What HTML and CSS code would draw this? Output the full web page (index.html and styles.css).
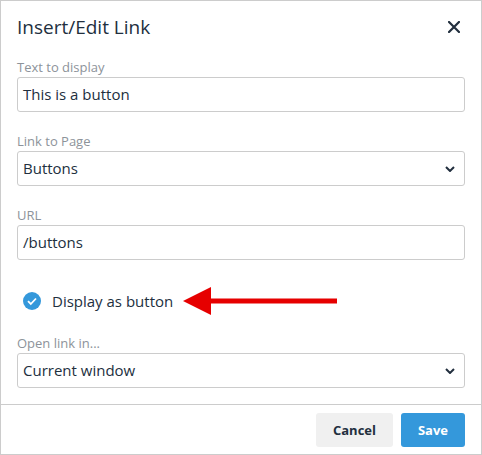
FILE: index.html
```html
<!DOCTYPE html>
<html lang="en">
<head>
    <meta charset="UTF-8">
    <meta name="viewport" content="width=device-width, initial-scale=1.0">
    <title>Insert/Edit Link</title>
    <link rel="stylesheet" href="styles.css">
</head>
<body>
    <div class="dialog">
        <div class="dialog-header">
            <h1 class="dialog-title">Insert/Edit Link</h1>
            <button class="close-btn" title="Close">
                <svg width="12" height="12" viewBox="0 0 12 12">
                    <path d="M1 1 L11 11 M11 1 L1 11" stroke="#222f3e" stroke-width="2.2" stroke-linecap="square"/>
                </svg>
            </button>
        </div>

        <div class="dialog-body">
            <div class="field">
                <label class="field-label">Text to display</label>
                <div class="text-input">This is a button</div>
            </div>

            <div class="field">
                <label class="field-label">Link to Page</label>
                <div class="text-input select">
                    <span>Buttons</span>
                    <svg class="chevron" width="10" height="6" viewBox="0 0 10 6">
                        <path d="M1 1 L5 5 L9 1" fill="none" stroke="#222f3e" stroke-width="2"/>
                    </svg>
                </div>
            </div>

            <div class="field">
                <label class="field-label">URL</label>
                <div class="text-input">/buttons</div>
            </div>

            <div class="check-row">
                <svg class="check-icon" width="18" height="18" viewBox="0 0 18 18">
                    <circle cx="9" cy="9" r="9" fill="#3498db"/>
                    <path d="M5 9.2 L7.8 12 L13 6.5" fill="none" stroke="#fff" stroke-width="1.8"/>
                </svg>
                <span class="check-label">Display as button</span>
                <!-- annotation arrow -->
                <svg class="arrow" width="154" height="30" viewBox="0 0 154 30">
                    <polygon points="0,15 28,1 28,29" fill="#e60000"/>
                    <rect x="26" y="12.5" width="128" height="5" fill="#e60000"/>
                </svg>
            </div>

            <div class="field">
                <label class="field-label">Open link in...</label>
                <div class="text-input select">
                    <span>Current window</span>
                    <svg class="chevron" width="10" height="6" viewBox="0 0 10 6">
                        <path d="M1 1 L5 5 L9 1" fill="none" stroke="#222f3e" stroke-width="2"/>
                    </svg>
                </div>
            </div>
        </div>

        <div class="dialog-footer">
            <button class="btn btn-secondary">Cancel</button>
            <button class="btn btn-primary">Save</button>
        </div>
    </div>
</body>
</html>
```

FILE: styles.css
```css
body {
    margin: 0;
    font-family: "Open Sans", "Noto Sans", Arial, sans-serif;
    color: #222f3e;
    background: #fff;
}
.dialog {
    width: 480px;
    height: 453px;
    border: 1px solid #ccc;
    display: flex;
    flex-direction: column;
}
.dialog-header {
    display: flex;
    align-items: center;
    justify-content: space-between;
    padding: 12px 21px 0 16px;
    height: 28px;
}
.dialog-title {
    margin: 0;
    font-size: 19px;
    font-weight: normal;
    line-height: 28px;
}
.close-btn {
    background: none;
    border: none;
    padding: 0;
    width: 12px;
    height: 12px;
    display: flex;
    cursor: pointer;
}
.dialog-body {
    flex: 1;
    min-height: 0;
    padding: 17px 16px 0 16px;
}
.field {
    margin-bottom: 20px;
}
.field:last-child {
    margin-bottom: 0;
}
.field-label {
    display: block;
    font-size: 13px;
    line-height: 18px;
    color: #8d939a;
    margin-bottom: 1px;
}
.text-input {
    box-sizing: border-box;
    height: 35px;
    border: 1px solid #ccc;
    border-radius: 3px;
    padding: 0 5px;
    font-size: 15px;
    line-height: 33px;
    color: #222f3e;
}
.select {
    display: flex;
    align-items: center;
    justify-content: space-between;
    padding-right: 9px;
}
.check-row {
    display: flex;
    align-items: center;
    height: 30px;
    padding-left: 6px;
    margin: 26px 0 18px 0;
}
.check-icon {
    flex: none;
}
.check-label {
    font-size: 15px;
    margin-left: 11px;
}
.arrow {
    margin-left: 10px;
}
.dialog-footer {
    border-top: 1px solid #ccc;
    display: flex;
    justify-content: flex-end;
    gap: 8px;
    padding: 8px 16px 7px 16px;
}
.btn {
    height: 34px;
    border: none;
    border-radius: 3px;
    font-family: inherit;
    font-size: 13px;
    font-weight: bold;
    padding: 0 16px;
    cursor: pointer;
}
.btn-secondary {
    background: #f0f0f0;
    color: #222f3e;
    width: 77px;
}
.btn-primary {
    background: #3498db;
    color: #fff;
    width: 64px;
}
```
